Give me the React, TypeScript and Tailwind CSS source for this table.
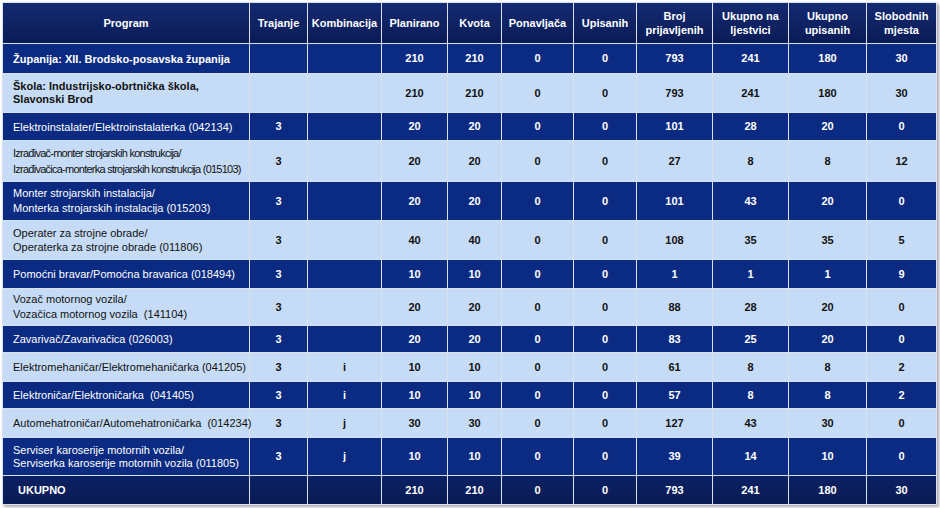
import React from "react";

type Row = {
  program: string[];
  bold?: boolean;
  narrow?: boolean;
  dark: boolean;
  trajanje?: string;
  komb?: string;
  vals: number[];
  h: string;
  leading?: string;
};

const COLS = [247, 58, 74, 66, 54, 72, 63, 76, 76, 78, 70];

const HEADERS: string[][] = [
  ["Program"],
  ["Trajanje"],
  ["Kombinacija"],
  ["Planirano"],
  ["Kvota"],
  ["Ponavljača"],
  ["Upisanih"],
  ["Broj", "prijavljenih"],
  ["Ukupno na", "ljestvici"],
  ["Ukupno", "upisanih"],
  ["Slobodnih", "mjesta"],
];

const ROWS: Row[] = [
  { program: ["Županija: XII. Brodsko-posavska županija"], bold: true, dark: true, vals: [210, 210, 0, 0, 793, 241, 180, 30], h: "h-[30px]" },
  { program: ["Škola: Industrijsko-obrtnička škola,", "Slavonski Brod"], bold: true, dark: false, vals: [210, 210, 0, 0, 793, 241, 180, 30], h: "h-[39px]", leading: "leading-[13px]" },
  { program: ["Elektroinstalater/Elektroinstalaterka (042134)"], dark: true, trajanje: "3", vals: [20, 20, 0, 0, 101, 28, 20, 0], h: "h-[28px]" },
  { program: ["Izrađivač-monter strojarskih konstrukcija/", "Izrađivačica-monterka strojarskih konstrukcija (015103)"], narrow: true, dark: false, trajanje: "3", vals: [20, 20, 0, 0, 27, 8, 8, 12], h: "h-[41px]", leading: "leading-[16px]" },
  { program: ["Monter strojarskih instalacija/", "Monterka strojarskih instalacija (015203)"], dark: true, trajanje: "3", vals: [20, 20, 0, 0, 101, 43, 20, 0], h: "h-[39px]", leading: "leading-[15px]" },
  { program: ["Operater za strojne obrade/", "Operaterka za strojne obrade (011806)"], dark: false, trajanje: "3", vals: [40, 40, 0, 0, 108, 35, 35, 5], h: "h-[39px]", leading: "leading-[14px]" },
  { program: ["Pomoćni bravar/Pomoćna bravarica (018494)"], dark: true, trajanje: "3", vals: [10, 10, 0, 0, 1, 1, 1, 9], h: "h-[29px]" },
  { program: ["Vozač motornog vozila/", "Vozačica motornog vozila  (141104)"], dark: false, trajanje: "3", vals: [20, 20, 0, 0, 88, 28, 20, 0], h: "h-[37px]", leading: "leading-[15px]" },
  { program: ["Zavarivač/Zavarivačica (026003)"], dark: true, trajanje: "3", vals: [20, 20, 0, 0, 83, 25, 20, 0], h: "h-[27px]" },
  { program: ["Elektromehaničar/Elektromehaničarka (041205)"], dark: false, trajanje: "3", komb: "i", vals: [10, 10, 0, 0, 61, 8, 8, 2], h: "h-[29px]" },
  { program: ["Elektroničar/Elektroničarka  (041405)"], dark: true, trajanje: "3", komb: "i", vals: [10, 10, 0, 0, 57, 8, 8, 2], h: "h-[27px]" },
  { program: ["Automehatroničar/Automehatroničarka  (014234)"], dark: false, trajanje: "3", komb: "j", vals: [30, 30, 0, 0, 127, 43, 30, 0], h: "h-[29px]" },
  { program: ["Serviser karoserije motornih vozila/", "Serviserka karoserije motornih vozila (011805)"], dark: true, trajanje: "3", komb: "j", vals: [10, 10, 0, 0, 39, 14, 10, 0], h: "h-[38px]", leading: "leading-[13px]" },
];

const TOTAL = [210, 210, 0, 0, 793, 241, 180, 30];

const cell = "border border-[#d9e1ee] p-0 align-middle";

// Enrolment table: navy header, alternating dark/light rows, totals row
export default function App() {
  return (
    <div className="w-[940px] h-[508px] bg-white p-[2px] font-['Liberation_Sans',Arial,sans-serif] text-[11px]">
      <table className="table-fixed border-collapse w-[934px] shadow-[2px_2px_3px_rgba(0,0,0,0.35)]">
        <colgroup>
          {COLS.map((w, i) => (
            <col key={i} style={{ width: w }} />
          ))}
        </colgroup>
        <thead>
          <tr className="h-[41px] bg-gradient-to-b from-[#142a72] to-[#0a1b55] text-white font-bold">
            {HEADERS.map((lines, i) => (
              <th key={i} className={`${cell} text-center leading-[14px] font-bold`}>
                {lines.map((l, j) => (
                  <div key={j}>{l}</div>
                ))}
              </th>
            ))}
          </tr>
        </thead>
        <tbody>
          {ROWS.map((r, i) => {
            const tone = r.dark ? "bg-[#0b2b82] text-white" : "bg-[#c6dcf6] text-[#111]";
            return (
              <tr key={i} className={`${r.h} ${tone}`}>
                <td
                  className={`${cell} pl-[10px] whitespace-pre ${r.leading ?? "leading-[14px]"} ${
                    r.bold ? "font-bold" : "font-normal"
                  } ${r.narrow ? "tracking-[-0.75px]" : ""}`}
                >
                  {r.program.map((l, j) => (
                    <div key={j}>{l}</div>
                  ))}
                </td>
                <td className={`${cell} text-center font-bold`}>{r.trajanje}</td>
                <td className={`${cell} text-center font-bold`}>{r.komb}</td>
                {r.vals.map((v, j) => (
                  <td key={j} className={`${cell} text-center font-bold`}>
                    {v}
                  </td>
                ))}
              </tr>
            );
          })}
          <tr className="h-[29px] bg-gradient-to-b from-[#0c2163] to-[#0a1b55] text-white font-bold">
            <td className={`${cell} pl-[15px]`}>UKUPNO</td>
            <td className={cell} />
            <td className={cell} />
            {TOTAL.map((v, j) => (
              <td key={j} className={`${cell} text-center`}>
                {v}
              </td>
            ))}
          </tr>
        </tbody>
      </table>
    </div>
  );
}
